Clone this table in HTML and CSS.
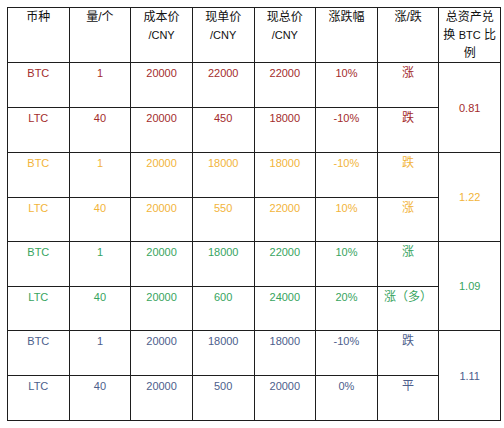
FILE: index.html
```html
<!DOCTYPE html>
<html lang="zh-CN">
<head>
<meta charset="utf-8">
<link rel="stylesheet" href="styles.css">
</head>
<body>
<div class="wrap">
<table class="grid">
  <colgroup>
    <col class="c"><col class="c"><col class="c"><col class="c"><col class="c"><col class="c"><col class="c"><col class="c">
  </colgroup>
  <thead>
    <tr class="head">
      <th>币种</th>
      <th>量/个</th>
      <th>成本价<br><span class="lat">/CNY</span></th>
      <th>现单价<br><span class="lat">/CNY</span></th>
      <th>现总价<br><span class="lat">/CNY</span></th>
      <th>涨跌幅</th>
      <th>涨/跌</th>
      <th>总资产兑<br>换 <span class="lat">BTC</span> 比<br>例</th>
    </tr>
  </thead>
  <tbody>
    <tr class="r red h45">
      <td>BTC</td><td>1</td><td>20000</td><td>22000</td><td>22000</td><td>10%</td><td class="cj">涨</td>
      <td class="ratio" rowspan="2">0.81</td>
    </tr>
    <tr class="r red h45">
      <td>LTC</td><td>40</td><td>20000</td><td>450</td><td>18000</td><td>-10%</td><td class="cj">跌</td>
    </tr>
    <tr class="r gold h45">
      <td>BTC</td><td>1</td><td>20000</td><td>18000</td><td>18000</td><td>-10%</td><td class="cj">跌</td>
      <td class="ratio" rowspan="2">1.22</td>
    </tr>
    <tr class="r gold h44">
      <td>LTC</td><td>40</td><td>20000</td><td>550</td><td>22000</td><td>10%</td><td class="cj">涨</td>
    </tr>
    <tr class="r green h45">
      <td>BTC</td><td>1</td><td>20000</td><td>18000</td><td>22000</td><td>10%</td><td class="cj">涨</td>
      <td class="ratio" rowspan="2">1.09</td>
    </tr>
    <tr class="r green h44">
      <td>LTC</td><td>40</td><td>20000</td><td>600</td><td>24000</td><td>20%</td><td class="cj">涨（多）</td>
    </tr>
    <tr class="r blue h45">
      <td>BTC</td><td>1</td><td>20000</td><td>18000</td><td>18000</td><td>-10%</td><td class="cj">跌</td>
      <td class="ratio" rowspan="2">1.11</td>
    </tr>
    <tr class="r blue h45">
      <td>LTC</td><td>40</td><td>20000</td><td>500</td><td>20000</td><td>0%</td><td class="cj">平</td>
    </tr>
  </tbody>
</table>
</div>
</body>
</html>
```

FILE: styles.css
```css
html, body {
  margin: 0;
  padding: 0;
  background: #ffffff;
}

.wrap {
  padding: 7px 0 0 7px;
}

.grid {
  border-collapse: collapse;
  table-layout: fixed;
  width: 494px;
  font-family: "Liberation Sans", "Noto Sans CJK SC", sans-serif;
  font-size: 11px;
  line-height: 18px;
}

.c {
  width: 61.6px;
}

.grid th,
.grid td {
  border: 1px solid #1e1e1e;
  padding: 1px 2px 0;
  text-align: center;
  vertical-align: top;
}

.grid th {
  font-weight: normal;
  font-size: 12px;
  color: #111111;
  padding-top: 0;
  line-height: 18px;
}

.grid th .lat {
  font-size: 11px;
}

.grid td.cj {
  font-size: 12px;
}

.head {
  height: 55px;
}

.h45 {
  height: 45px;
}

.h44 {
  height: 44px;
}

.grid td.ratio {
  vertical-align: middle;
  padding-top: 0;
}

.red {
  color: #a32c2c;
}

.gold {
  color: #f2b43a;
}

.green {
  color: #37a460;
}

.blue {
  color: #4d5e8c;
}
```
